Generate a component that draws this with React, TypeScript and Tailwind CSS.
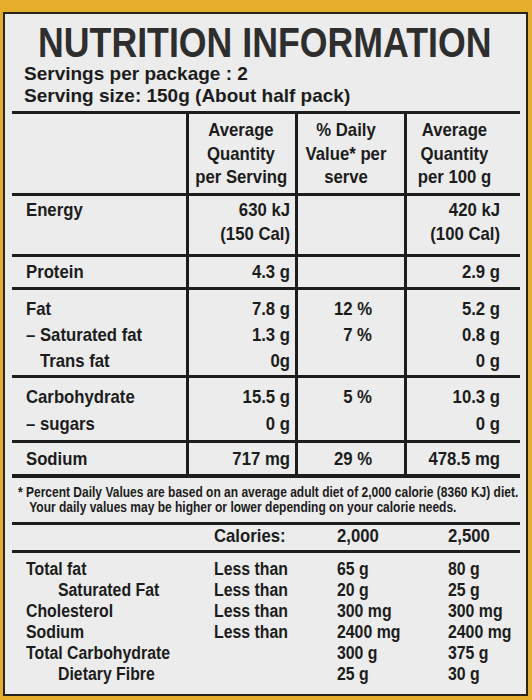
import React from "react";

const A = "font-['Liberation_Sans',Arial,sans-serif]";

type O = "l" | "r" | "c";

function S({ children, o }: { children: React.ReactNode; o: O }) {
  const origin = o === "l" ? "origin-left text-left" : o === "r" ? "origin-right text-right" : "origin-center text-center";
  return <div className={`whitespace-pre scale-x-[0.88] ${origin}`}>{children}</div>;
}

function Lines({ lines, o }: { lines: string[]; o: O }) {
  return (
    <>
      {lines.map((l, i) => (
        <S key={i} o={o}>
          {l === "" ? "\u00a0" : l}
        </S>
      ))}
    </>
  );
}

type RowProps = {
  h: string;
  pt: string;
  lh: string;
  border?: string;
  c1: string[];
  c2: string[];
  c3: string[];
  c4: string[];
  header?: boolean;
};

function Row({ h, pt, lh, border = "border-b-[3px]", c1, c2, c3, c4, header }: RowProps) {
  const o: O = header ? "c" : "r";
  return (
    <div className={`grid grid-cols-[174px_109px_109px_116px] border-[#1d1d1d] ${border} ${h} ${lh}`}>
      <div className={`pl-[14px] ${pt}`}>
        <Lines lines={c1} o="l" />
      </div>
      <div className={`border-l-[3px] border-[#1d1d1d] ${pt} ${header ? "pr-[2px]" : "pr-[5px]"}`}>
        <Lines lines={c2} o={o} />
      </div>
      <div className={`border-l-[3px] border-[#1d1d1d] ${pt} ${header ? "pr-[10px]" : "pr-[32px]"}`}>
        <Lines lines={c3} o={o} />
      </div>
      <div className={`border-l-[3px] border-[#1d1d1d] ${pt} ${header ? "pr-[18px]" : "pr-[20px]"}`}>
        <Lines lines={c4} o={o} />
      </div>
    </div>
  );
}

const daily = [
  ["Total fat", "Less than", "65 g", "80 g", false],
  ["Saturated Fat", "Less than", "20 g", "25 g", true],
  ["Cholesterol", "Less than", "300 mg", "300 mg", false],
  ["Sodium", "Less than", "2400 mg", "2400 mg", false],
  ["Total Carbohydrate", "", "300 g", "375 g", false],
  ["Dietary Fibre", "", "25 g", "30 g", true],
] as const;

export default function App() {
  return (
    <div className={`${A} w-[532px] h-[700px] bg-[#e4ae2c] overflow-hidden pt-[12px] pl-[3px]`}>
      <div className="w-[525px] h-[684px] border-2 border-[#2a241e] bg-[#ebeceb] text-[#1c1c1c] overflow-hidden">
        <div className="flex justify-center mt-[9px] pr-[1px]">
          <div className="whitespace-nowrap font-bold text-[42px] leading-[40px] text-[#2e2e2e] scale-x-[0.85] origin-center">
            NUTRITION INFORMATION
          </div>
        </div>
        <div className="font-bold text-[19px] leading-[22px] pl-[19px]">
          <div>Servings per package : 2</div>
          <div>Serving size: 150g (About half pack)</div>
        </div>
        <div className="font-bold text-[19px] ml-[7px] w-[508px] mt-[4px] border-t-[3px] border-[#1d1d1d]">
          <Row
            header
            h="h-[82px]"
            pt="pt-[4px]"
            lh="leading-[23.5px]"
            c1={[""]}
            c2={["Average", "Quantity", "per Serving"]}
            c3={["% Daily", "Value* per", "serve"]}
            c4={["Average", "Quantity", "per 100 g"]}
          />
          <Row
            h="h-[61px]"
            pt="pt-[2px]"
            lh="leading-[24px]"
            c1={["Energy"]}
            c2={["630 kJ", "(150 Cal)"]}
            c3={[""]}
            c4={["420 kJ", "(100 Cal)"]}
          />
          <Row
            h="h-[33px]"
            pt="pt-[3px]"
            lh="leading-[24px]"
            c1={["Protein"]}
            c2={["4.3 g"]}
            c3={[""]}
            c4={["2.9 g"]}
          />
          <Row
            h="h-[88px]"
            pt="pt-[6px]"
            lh="leading-[26px]"
            c1={["Fat", "– Saturated fat", "   Trans fat"]}
            c2={["7.8 g", "1.3 g", "0g"]}
            c3={["12 %", "7 %", ""]}
            c4={["5.2 g", "0.8 g", "0 g"]}
          />
          <Row
            h="h-[65px]"
            pt="pt-[5px]"
            lh="leading-[27px]"
            c1={["Carbohydrate", "– sugars"]}
            c2={["15.5 g", "0 g"]}
            c3={["5 %", ""]}
            c4={["10.3 g", "0 g"]}
          />
          <Row
            h="h-[35px]"
            pt="pt-[4px]"
            lh="leading-[24px]"
            border="border-b-[4px]"
            c1={["Sodium"]}
            c2={["717 mg"]}
            c3={["29 %"]}
            c4={["478.5 mg"]}
          />
          <div className="h-[47px] border-b-[3px] border-[#1d1d1d] pt-[6px] pl-[6px] text-[15px] leading-[15px]">
            <div className="whitespace-nowrap scale-x-[0.8] origin-left">
              * Percent Daily Values are based on an average adult diet of 2,000 calorie (8360 KJ) diet.
            </div>
            <div className="whitespace-nowrap scale-x-[0.8] origin-left pl-[14px]">
              Your daily values may be higher or lower depending on your calorie needs.
            </div>
          </div>
          <div className="grid grid-cols-[202px_123px_111px_72px] h-[28px] border-b-[3px] border-[#1d1d1d] leading-[22px]">
            <div />
            <S o="l">Calories:</S>
            <S o="l">2,000</S>
            <S o="l">2,500</S>
          </div>
          <div className="pt-[6px] text-[18px] leading-[21px]">
            {daily.map(([a, b, c, d, ind]) => (
              <div key={a} className="grid grid-cols-[202px_123px_111px_72px]">
                <div className={ind ? "pl-[46px]" : "pl-[14px]"}>
                  <S o="l">{a}</S>
                </div>
                <S o="l">{b === "" ? "\u00a0" : b}</S>
                <S o="l">{c}</S>
                <S o="l">{d}</S>
              </div>
            ))}
          </div>
        </div>
      </div>
    </div>
  );
}
